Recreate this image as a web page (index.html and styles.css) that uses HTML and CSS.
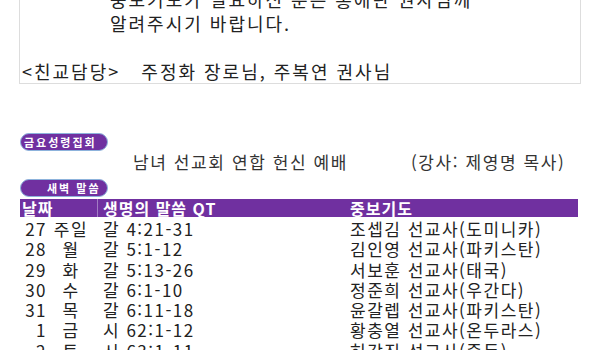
FILE: index.html
```html
<!DOCTYPE html>
<html lang="ko">
<head>
<meta charset="utf-8">
<link rel="stylesheet" href="styles.css">
</head>
<body>
<div class="page">
  <div class="notice">
    <p class="line indent">중보기도가 필요하신 분은 홍애란 권사님께</p>
    <p class="line indent">알려주시기 바랍니다.</p>
    <p class="line blank"></p>
    <p class="line">&lt;친교담당&gt;&nbsp;&nbsp; 주정화 장로님, 주복연 권사님</p>
  </div>

  <div class="pill pill-friday">금요성령집회</div>
  <div class="event">
    <span class="event-title">남녀 선교회 연합 헌신 예배</span>
    <span class="event-speaker">(강사: 제영명 목사)</span>
  </div>

  <div class="pill pill-dawn">새벽 말씀</div>
  <div class="table">
    <div class="row head">
      <div class="c1">날짜</div>
      <div class="c2">생명의 말씀 QT</div>
      <div class="c3">중보기도</div>
    </div>
    <div class="row">
      <div class="c1"><span class="num">27</span><span class="day">주일</span></div>
      <div class="c2">갈 4:21-31</div>
      <div class="c3">조셉김 선교사(도미니카)</div>
    </div>
    <div class="row">
      <div class="c1"><span class="num">28</span><span class="day">월</span></div>
      <div class="c2">갈 5:1-12</div>
      <div class="c3">김인영 선교사(파키스탄)</div>
    </div>
    <div class="row">
      <div class="c1"><span class="num">29</span><span class="day">화</span></div>
      <div class="c2">갈 5:13-26</div>
      <div class="c3">서보훈 선교사(태국)</div>
    </div>
    <div class="row">
      <div class="c1"><span class="num">30</span><span class="day">수</span></div>
      <div class="c2">갈 6:1-10</div>
      <div class="c3">정준희 선교사(우간다)</div>
    </div>
    <div class="row">
      <div class="c1"><span class="num">31</span><span class="day">목</span></div>
      <div class="c2">갈 6:11-18</div>
      <div class="c3">윤갈렙 선교사(파키스탄)</div>
    </div>
    <div class="row">
      <div class="c1"><span class="num">1</span><span class="day">금</span></div>
      <div class="c2">시 62:1-12</div>
      <div class="c3">황충열 선교사(온두라스)</div>
    </div>
    <div class="row">
      <div class="c1"><span class="num">2</span><span class="day">토</span></div>
      <div class="c2">시 63:1-11</div>
      <div class="c3">허강진 선교사(중동)</div>
    </div>
  </div>
</div>
</body>
</html>
```

FILE: styles.css
```css
html, body {
  margin: 0;
  padding: 0;
  background: #fff;
}
body {
  font-family: "Noto Sans CJK KR", "Noto Sans", sans-serif;
  color: #222;
  overflow: hidden;
}
.page {
  width: 558px;
  margin-left: 20px;
}
.notice {
  margin-top: -14px;
  margin-left: -1px;
  width: 558px;
  border: 1px solid #ddd;
  padding: 0 0 0 2px;
}
.line {
  margin: 0;
  font-size: 18px;
  letter-spacing: 2px;
  line-height: 24px;
  height: 24px;
  white-space: nowrap;
}
.indent {
  padding-left: 88px;
}
.pill {
  box-sizing: border-box;
  width: 88px;
  height: 18px;
  border-radius: 9px;
  background: #7030a0;
  border: 1px solid #8db3dc;
  color: #fff;
  font-size: 11px;
  font-weight: bold;
  letter-spacing: 2px;
  line-height: 16px;
  white-space: nowrap;
}
.pill-friday {
  margin-top: 49px;
  padding-left: 3px;
}
.pill-dawn {
  margin-top: 7px;
  padding-left: 26px;
}
.event {
  display: flex;
  margin-top: 1px;
  padding-left: 113px;
  height: 20px;
  font-size: 17px;
  letter-spacing: 1.6px;
  line-height: 20px;
  color: #333;
  white-space: nowrap;
}
.event-title {
  width: 278px;
}
.table {
  margin-top: 2px;
}
.row {
  display: grid;
  grid-template-columns: 77px 250px 1fr;
  font-size: 17px;
  letter-spacing: 1.5px;
  line-height: 20.3px;
  white-space: nowrap;
}
.row.head {
  background: #7030a0;
  color: #fff;
  font-weight: bold;
  font-size: 16px;
  letter-spacing: 1px;
  line-height: 18px;
  height: 18px;
  margin-bottom: 2px;
}
.c1 {
  padding-left: 2px;
  display: flex;
}
.row .c2 {
  padding-left: 6px;
}
.row.head .c2 {
  border-left: 1px solid #a27cc4;
  padding-left: 5px;
}
.c3 {
  padding-left: 3px;
}
.num {
  width: 25px;
  text-align: right;
}
.day {
  width: 40px;
  margin-left: 4px;
  text-align: center;
}
```
